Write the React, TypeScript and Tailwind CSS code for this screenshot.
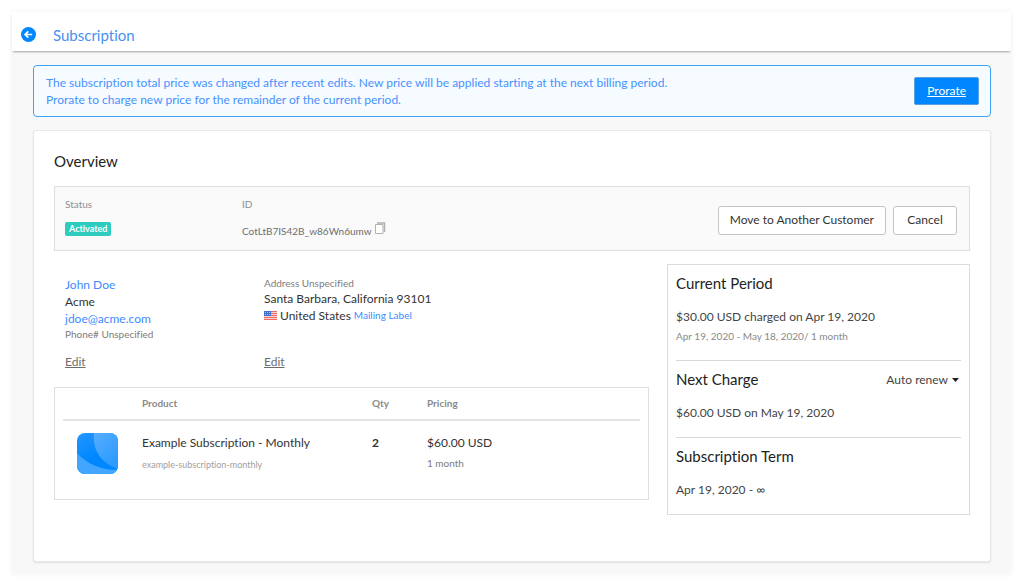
import React from 'react';

const CopyIcon: React.FC = () => (
  <svg width="11" height="12" viewBox="0 0 11 12" fill="none" stroke="#b0b0b0" aria-hidden="true">
    <path d="M.5 2.500h7.500v9H.5z" fill="#fff" />
    <path d="M2 1h7.500v9" strokeWidth="1.500" />
  </svg>
);

const BackIcon: React.FC = () => (
  <svg width="15" height="15" viewBox="0 0 15 15" aria-hidden="true">
    <circle cx="7.5" cy="7.5" r="7.5" fill="#0087ff" />
    <path d="M11.200 7.500H4.400M7.300 4.300 4.100 7.500l3.200 3.200" fill="none" stroke="#fff" strokeWidth="1.700" />
  </svg>
);

const FlagIcon: React.FC = () => (
  <svg width="13" height="9" viewBox="0 0 13 9" aria-hidden="true">
    <rect width="13" height="9" fill="#f6d5d5" />
    <path d="M0 .5h13M0 2.500h13M0 4.500h13M0 6.500h13M0 8.500h13" stroke="#ee6a62" />
    <rect width="7" height="5" fill="#3f6fd0" />
    <path d="M1 1.500h5M1 3.500h5" stroke="#a9c0ee" strokeDasharray="1 1" />
  </svg>
);

const ProductLogo: React.FC = () => (
  <svg width="41" height="41" viewBox="0 0 41 41" aria-hidden="true">
    <defs>
      <linearGradient id="logo-base" x1="0" y1="0" x2="0.6" y2="1">
        <stop offset="0" stopColor="#2396ff" />
        <stop offset="0.6" stopColor="#0087ff" />
        <stop offset="1" stopColor="#0087ff" />
      </linearGradient>
      <linearGradient id="logo-top" x1="0" y1="0" x2="0.6" y2="1">
        <stop offset="0" stopColor="#56adff" />
        <stop offset="1" stopColor="#2c9aff" />
      </linearGradient>
      <clipPath id="logo-clip">
        <rect width="41" height="41" rx="8" />
      </clipPath>
    </defs>
    <g clipPath="url(#logo-clip)">
      <rect width="41" height="41" fill="url(#logo-base)" />
      <path d="M17 0C15 17 24 30 41 36V0z" fill="url(#logo-top)" />
      <path d="M0 20C10 31 24 37 41 37v4H0z" fill="#42a5ff" />
    </g>
  </svg>
);

const Alert: React.FC = () => (
  <div className="flex items-center justify-between rounded border border-[#3fa2fb] bg-[#f6fbff] py-2 pr-[11px] pl-3">
    <p className="text-[12px] leading-[17px] text-[#4791ff]">
      The subscription total price was changed after recent edits. New price will be applied starting at the next billing period.
      <br />
      Prorate to charge new price for the remainder of the current period.
    </p>
    <button type="button" className="h-7 rounded-xs border border-[#5b9fdc] bg-[#0087ff] px-3 text-[12px] text-white underline">
      Prorate
    </button>
  </div>
);

const StatusBar: React.FC = () => (
  <div className="flex items-center justify-between border border-[#dedede] bg-[#fafafa] pt-[11px] pr-3 pb-[10px] pl-[10px]">
    <div className="flex">
      <div className="w-[177px]">
        <p className="text-[10px] leading-3 text-[#8e8e8e]">Status</p>
        <span className="mt-3 inline-block rounded-xs bg-[#2dccbe] px-1 text-[9px] leading-[14px] font-bold text-white">Activated</span>
      </div>
      <div>
        <p className="text-[10px] leading-3 text-[#8e8e8e]">ID</p>
        <p className="mt-3 flex items-start gap-[3px] text-[10px] leading-[18px] text-[#6e6e6e]">
          CotLtB7IS42B_w86Wn6umw
          <button type="button" aria-label="Copy ID">
            <CopyIcon />
          </button>
        </p>
      </div>
    </div>
    <div className="flex gap-[7px] pt-[2px] text-[12px] text-[#333]">
      <button type="button" className="h-[29px] rounded-[3px] border border-[#c4c4c4] bg-white px-[11px]">Move to Another Customer</button>
      <button type="button" className="h-[29px] min-w-16 rounded-[3px] border border-[#c4c4c4] bg-white px-[11px]">Cancel</button>
    </div>
  </div>
);

const Contact: React.FC = () => (
  <div className="flex px-[11px] pt-[11px] text-[12px] leading-[17px] text-[#333]">
    <div className="flex w-[199px] flex-col items-start">
      <a href="#customer" className="text-[#3d8bff]">John Doe</a>
      <p>Acme</p>
      <a href="#email" className="text-[#3d8bff]">jdoe@acme.com</a>
      <p className="text-[10px] leading-[14px] text-[#7d7d7d]">Phone# Unspecified</p>
      <a href="#edit-customer" className="mt-3 text-[#6e6e6e] underline">Edit</a>
    </div>
    <div className="flex flex-col items-start justify-between">
      <div>
        <p className="text-[10px] leading-[14px] text-[#7d7d7d]">Address Unspecified</p>
        <p>Santa Barbara, California 93101</p>
        <p className="flex items-center gap-[3px]">
          <FlagIcon />
          United States
          <a href="#label" className="text-[10px] text-[#3d8bff]">Mailing Label</a>
        </p>
      </div>
      <a href="#edit-address" className="text-[#6e6e6e] underline">Edit</a>
    </div>
  </div>
);

const Products: React.FC = () => (
  <div className="mt-[17px] border border-[#dfdfdf] px-2 pb-[25px]">
    <table className="w-full table-fixed text-left text-[12px] text-[#333]">
      <thead>
        <tr className="h-8 border-b-2 border-[#e5e5e5] text-[10px] text-[#8a8a8a]">
          <th className="w-[79px]" aria-label="Image" />
          <th className="w-[230px] font-bold">Product</th>
          <th className="w-[55px] font-bold">Qty</th>
          <th className="font-bold">Pricing</th>
        </tr>
      </thead>
      <tbody>
        <tr className="align-top">
          <td className="pt-3 pl-[14px]"><ProductLogo /></td>
          <td className="pt-3">
            <p className="leading-5">Example Subscription - Monthly</p>
            <p className="mt-1 text-[9px] leading-4 text-[#a0a0a0]">example-subscription-monthly</p>
          </td>
          <td className="pt-3 leading-5 font-bold">2</td>
          <td className="pt-3">
            <p className="leading-5">$60.00 USD</p>
            <p className="mt-[2px] text-[10px] leading-4 text-[#7d7d7d]">1 month</p>
          </td>
        </tr>
      </tbody>
    </table>
  </div>
);

const Billing: React.FC = () => (
  <aside className="mt-[13px] w-[303px] shrink-0 self-start border border-[#dcdcdc] px-2 text-[12px] leading-4 text-[#444]">
    <section className="border-b border-[#d8d8d8] pt-2 pb-4">
      <h3 className="text-[15px] leading-5 text-[#222]">Current Period</h3>
      <p className="mt-4">$30.00 USD charged on Apr 19, 2020</p>
      <p className="mt-[3px] text-[10px] text-[#8a8a8a]">Apr 19, 2020 - May 18, 2020/ 1 month</p>
    </section>
    <section className="border-b border-[#d8d8d8] pt-2 pb-4">
      <div className="flex items-center justify-between">
        <h3 className="text-[15px] leading-5 text-[#222]">Next Charge</h3>
        <div className="flex items-center gap-1 pt-[2px] pr-[2px]">
          <select aria-label="Renewal" className="field-sizing-content appearance-none bg-transparent text-[#444]">
            <option>Auto renew</option>
          </select>
          <svg width="7" height="4" viewBox="0 0 7 4" aria-hidden="true">
            <path d="M0 0h7L3.500 4z" fill="#222" />
          </svg>
        </div>
      </div>
      <p className="mt-4">$60.00 USD on May 19, 2020</p>
    </section>
    <section className="pt-2 pb-4">
      <h3 className="text-[15px] leading-5 text-[#222]">Subscription Term</h3>
      <p className="mt-4">Apr 19, 2020 - ∞</p>
    </section>
  </aside>
);

const App: React.FC = () => {
  return (
    <div className="bg-white py-3 pr-[13px] pl-3 font-['Lato',sans-serif] [font-variant-ligatures:none]">
      <div className="bg-[#f8f8f8] pb-3 shadow-[0_0_6px_rgba(0,0,0,0.06)]">
        <header className="flex h-[39px] items-center gap-[17px] bg-white px-[9px] pt-[5px] shadow-[0_2px_2px_-1px_rgba(0,0,0,0.35)]">
          <a href="#back" aria-label="Back"><BackIcon /></a>
          <h1 className="pt-[2px] text-[15px] text-[#4791f0]">Subscription</h1>
        </header>

        <main className="pt-[14px] pr-5 pl-[21px]">
          <Alert />

          <div className="mt-[13px] rounded-[3px] border border-[#e8e8e8] bg-white px-5 pt-5 pb-[46px] shadow-[0_1px_2px_rgba(0,0,0,0.1)]">
            <h2 className="mb-[15px] text-[15px] leading-5 text-[#222]">Overview</h2>
            <StatusBar />
            <div className="flex gap-[18px]">
              <div className="min-w-0 flex-1 pt-[14px]">
                <Contact />
                <Products />
              </div>
              <Billing />
            </div>
          </div>
        </main>
      </div>
    </div>
  );
};

export default App;
